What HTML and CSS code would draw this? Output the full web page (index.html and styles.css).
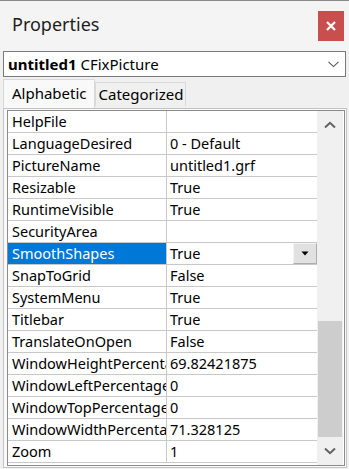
FILE: index.html
```html
<!DOCTYPE html>
<html lang="en">
<head>
    <meta charset="UTF-8">
    <title>Properties</title>
    <link rel="stylesheet" href="styles.css">
</head>
<body>
    <div class="window">
        <!-- title bar -->
        <div class="titlebar">
            <span class="title">Properties</span>
            <div class="close">
                <svg width="10" height="10" viewBox="0 0 10 10"><path d="M1 1L9 9M9 1L1 9" stroke="#fff" stroke-width="2.2"/></svg>
            </div>
        </div>

        <!-- object selector -->
        <div class="combo">
            <span><b>untitled1</b> CFixPicture</span>
            <svg class="combo-arrow" width="11" height="7" viewBox="0 0 11 7"><path d="M0.5 0.8L5.5 5.6L10.5 0.8" fill="none" stroke="#555" stroke-width="1.1"/></svg>
        </div>

        <div class="tabs">
            <span class="tab active">Alphabetic</span>
            <span class="tab">Categorized</span>
        </div>

        <div class="page">
            <div class="frame">
                <div class="grid">
                    <div class="row"><span class="name">HelpFile</span><span class="value"></span></div>
                    <div class="row"><span class="name">LanguageDesired</span><span class="value">0 - Default</span></div>
                    <div class="row"><span class="name">PictureName</span><span class="value">untitled1.grf</span></div>
                    <div class="row"><span class="name">Resizable</span><span class="value">True</span></div>
                    <div class="row"><span class="name">RuntimeVisible</span><span class="value">True</span></div>
                    <div class="row"><span class="name">SecurityArea</span><span class="value"></span></div>
                    <div class="row selected">
                        <span class="name">SmoothShapes</span>
                        <span class="value">True
                            <span class="drop"><svg width="8" height="5" viewBox="0 0 8 5"><path d="M0.5 0.5H7.5L4 4.5Z" fill="#000"/></svg></span>
                        </span>
                    </div>
                    <div class="row"><span class="name">SnapToGrid</span><span class="value">False</span></div>
                    <div class="row"><span class="name">SystemMenu</span><span class="value">True</span></div>
                    <div class="row"><span class="name">Titlebar</span><span class="value">True</span></div>
                    <div class="row"><span class="name">TranslateOnOpen</span><span class="value">False</span></div>
                    <div class="row"><span class="name">WindowHeightPercentage</span><span class="value">69.82421875</span></div>
                    <div class="row"><span class="name">WindowLeftPercentage</span><span class="value">0</span></div>
                    <div class="row"><span class="name">WindowTopPercentage</span><span class="value">0</span></div>
                    <div class="row"><span class="name">WindowWidthPercentage</span><span class="value">71.328125</span></div>
                    <div class="row"><span class="name">Zoom</span><span class="value">1</span></div>
                </div>

                <!-- vertical scrollbar -->
                <div class="scrollbar">
                    <div class="sb-btn">
                        <svg width="12" height="8" viewBox="0 0 12 8"><path d="M1 6.5L6 1.8L11 6.5" fill="none" stroke="#606060" stroke-width="2"/></svg>
                    </div>
                    <div class="sb-track">
                        <div class="sb-thumb"></div>
                    </div>
                    <div class="sb-btn">
                        <svg width="12" height="8" viewBox="0 0 12 8"><path d="M1 1.5L6 6.2L11 1.5" fill="none" stroke="#606060" stroke-width="2"/></svg>
                    </div>
                </div>
            </div>
        </div>
    </div>
</body>
</html>
```

FILE: styles.css
```css
* {
    box-sizing: border-box;
    margin: 0;
    padding: 0;
}
body {
    width: 349px;
    height: 469px;
    overflow: hidden;
    background: #f0f0f0;
    font-family: "Noto Sans", "Open Sans", sans-serif;
    font-size: 14.5px;
    color: #000;
}
.window {
    display: flex;
    flex-direction: column;
    height: 469px;
    border-top: 1px solid #8a8a8a;
}
.titlebar {
    height: 50px;
    display: flex;
    align-items: flex-start;
    justify-content: space-between;
    padding: 9px 5px 0 12px;
    background: #f4f4f4;
}
.title {
    font-size: 18px;
    line-height: 28px;
    color: #1e1e1e;
}
.close {
    width: 26px;
    height: 30px;
    margin-top: 1px;
    background: #c94f4f;
    display: flex;
    align-items: center;
    justify-content: center;
}
.combo {
    margin: 0 3px;
    height: 26px;
    background: #fff;
    border: 1px solid #7a7a7a;
    display: flex;
    align-items: center;
    justify-content: space-between;
    padding: 0 6px 0 4px;
    font-size: 15px;
}
.combo b {
    font-weight: 700;
}
.tabs {
    height: 31px;
    display: flex;
    align-items: flex-end;
    padding-left: 3px;
}
.tab {
    height: 24px;
    line-height: 22px;
    padding: 0 2px 0 3px;
    border: 1px solid #d9d9d9;
    border-bottom: none;
    background: #f0f0f0;
    font-size: 15px;
    margin-bottom: 2px;
}
.tab.active {
    height: 29px;
    line-height: 26px;
    padding: 0 7px 0 8px;
    background: #f9f9f9;
    margin-bottom: 0;
}
.page {
    flex: 1;
    margin: 0 2px 1px 3px;
    border: 1px solid #c4c4c4;
    padding: 1px 1px 1px 3px;
    background: #f9f9f9;
}
.frame {
    display: flex;
    border: 1px solid #8c8c8c;
    background: #fff;
    height: 356px;
}
.grid {
    width: 309px;
}
.row {
    display: flex;
    height: 22px;
    line-height: 21px;
    border-bottom: 1px solid #c8c8c8;
}
.name {
    width: 159px;
    padding-left: 4px;
    border-right: 1px solid #c8c8c8;
    white-space: nowrap;
    overflow: hidden;
}
.value {
    flex: 1;
    padding-left: 3px;
    display: flex;
    justify-content: space-between;
    align-items: stretch;
}
.selected .name {
    background: #0078d7;
    color: #fff;
}
.drop {
    width: 24px;
    background: #e1e1e1;
    border: 1px solid #adadad;
    border-top-color: #f4f4f4;
    border-left-color: #f4f4f4;
    display: flex;
    align-items: center;
    justify-content: center;
}
.scrollbar {
    width: 26px;
    display: flex;
    flex-direction: column;
    background: #f0f0f0;
}
.sb-btn {
    height: 28px;
    display: flex;
    align-items: center;
    justify-content: center;
}
.sb-track {
    flex: 1;
    display: flex;
    flex-direction: column;
    justify-content: flex-end;
    padding: 0 1px 0 1px;
}
.sb-thumb {
    height: 116px;
    background: #cdcdcd;
}
```
